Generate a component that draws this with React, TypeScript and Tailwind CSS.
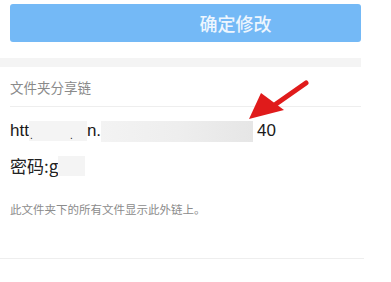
export default function App() {
  return (
    <div className="relative w-[391px] h-[282px] overflow-hidden bg-white font-['Noto_Sans_CJK_SC','Noto_Sans',sans-serif]">
      <div className="pt-[4px] pl-[10px] w-[361px]">
        <button className="w-full h-[38px] rounded-[3px] bg-[#74b9f6] text-[#eef6fe] text-[18px] font-medium pl-[100px] leading-[38px]">
          确定修改
        </button>
      </div>
      <div className="mt-[16px] w-[361px] h-[9px] bg-[#f4f4f4]" />

      <div className="w-[361px] pl-[10px]">
        <div className="h-[40px] flex items-center pt-[2px] text-[13.5px] text-[#8a8a8a] border-b border-[#eeeeee]">
          文件夹分享链
        </div>

        <div className="mt-[12px] h-[24px] flex items-center text-[17px] text-[#1a1a1a] font-['Liberation_Sans','Noto_Sans_CJK_SC',sans-serif]">
          <span>htt</span>
          <span className="w-[58px] h-[20px] bg-[#f4f4f4] relative">
            <span className="absolute left-[1px] bottom-[-2px] text-[10px]">.</span>
            <span className="absolute left-[41px] bottom-[-2px] text-[10px]">.</span>
          </span>
          <span>n.</span>
          <span className="w-[152px] h-[21px] bg-gradient-to-r from-[#f3f3f3] via-[#eeeeee] to-[#e6e6e6]" />
          <span className="ml-[4px]">40</span>
        </div>

        <div className="mt-[12px] h-[22px] flex items-center text-[17px] text-[#222222]">
          <span>密码:g</span>
          <span className="w-[27px] h-[20px] bg-[#f4f4f4]" />
        </div>

        <div className="mt-[24px] text-[11.5px] text-[#8c8c8c] leading-[16px]">
          此文件夹下的所有文件显示此外链上。
        </div>
      </div>

      <div className="mt-[41px] w-[364px] border-t border-[#eeeeee]" />

      <svg className="absolute left-[246px] top-[78px]" width="66" height="48" viewBox="0 0 66 48">
        <line x1="60" y1="5" x2="30" y2="26" stroke="#e01b1b" strokeWidth="5" strokeLinecap="round" />
        <polygon points="3,41 15,15 38,32" fill="#e01b1b" />
      </svg>
    </div>
  );
}
